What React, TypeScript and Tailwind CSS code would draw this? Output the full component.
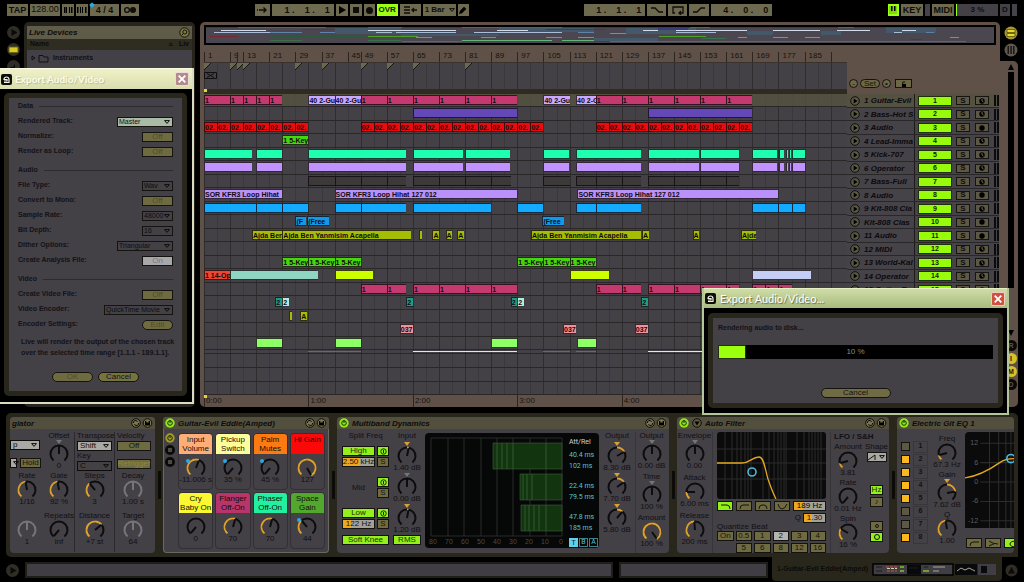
import { Fragment, type ReactNode } from "react";

type Clip = [from: number, to: number, text?: string, tone?: string];
type Lane = { tone: string; clips: Clip[] };

// length of the visible arrangement, in bars
const BARS = 197;

const pct = (bars: number) => `${(bars / BARS) * 100}%`;

const PINK = "bg-[#c43a6e]";
const LILAC = "bg-[#c9a8ff]";
const TEAL = "bg-[#1f9b82]";
const MINT = "bg-[#b3ebdf]";
const LIME = "bg-[#ccff00]";

// same text on back-to-back clips of equal length
function run(from: number, to: number, step: number, text?: string): Clip[] {
  const out: Clip[] = [];
  for (let b = from; b < to; b += step) out.push([b, Math.min(b + step, to), text]);
  return out;
}

const DRUMS: Clip[] = [
  [1, 15.8],
  [17, 24.8],
  [33, 62.9],
  [65, 80.4],
  [81, 94.9],
  [105, 112.8],
  [115, 135],
  [137, 152.6],
  [153, 165],
  [169, 176.5],
  [177.2, 178.6],
  [179.2, 179.8],
  [180.2, 180.7],
  [181.2, 185],
];

const LANES: Lane[] = [
  {
    tone: PINK,
    clips: [
      [1, 9, "1"],
      ...run(9, 25, 4, "1"),
      [33, 41, "40 2-Gu", LILAC],
      [41, 49, "40 2-Gu", LILAC],
      ...run(49, 97, 8, "1"),
      [105, 113, "40 2-Gu", LILAC],
      [115, 121, "40 2-G", LILAC],
      ...run(121, 169, 8, "1"),
    ],
  },
  { tone: "bg-[#6548b8]", clips: [[65, 97], [137, 169]] },
  {
    tone: "bg-[#ea0c0c]",
    clips: [...run(1, 33, 4, "02."), ...run(49, 105, 4, "02."), ...run(121, 169, 4, "02.")],
  },
  { tone: "bg-[#46d60e]", clips: [[25, 33, "1 5-Key"]] },
  { tone: "bg-[#1fffb0]", clips: DRUMS },
  { tone: "bg-[#c093ff]", clips: DRUMS },
  {
    tone: "bg-[#3b3a39]",
    clips: [...run(33, 63, 8), ...run(65, 95, 8), [105, 113], [115, 121], ...run(121, 135, 8), ...run(137, 165, 8)],
  },
  {
    tone: "bg-[#ba90fa]",
    clips: [
      [1, 25, "SOR KFR3 Loop Hihat"],
      [41, 97, "SOR KFR3 Loop Hihat 127 012"],
      [115.4, 177, "SOR KFR3 Loop Hihat 127 012"],
    ],
  },
  {
    tone: "bg-[#12abff]",
    clips: [
      [1, 17],
      [17, 25],
      [25, 33],
      [41, 49],
      [49, 63],
      [65, 89],
      [97, 105],
      [115, 121],
      [121, 135],
      [169, 177],
      [177, 181],
      [181, 185],
    ],
  },
  {
    tone: "bg-[#1299e6]",
    clips: [[29, 32.4, "(F"], [32.6, 39.2, "(Free"], [104.7, 111.3, "(Free"]],
  },
  {
    tone: "bg-[#a5bd04]",
    clips: [
      [15.7, 25, "Ajda Ben"],
      [25, 64.4, "Ajda Ben Yanmisim Acapella"],
      [67, 67.9],
      [71, 72.9, "A"],
      [75, 76.9, "A"],
      [78.6, 80.6, "A"],
      [101.2, 135, "Ajda Ben Yanmisim Acapella"],
      [135.2, 137.2, "A"],
      [150.7, 152.7, "A"],
      [165.5, 170, "Ajda"],
    ],
  },
  { tone: "bg-transparent", clips: [] },
  { tone: "bg-[#46d60e]", clips: [...run(25, 49, 8, "1 5-Key"), ...run(97, 121, 8, "1 5-Key")] },
  {
    tone: LIME,
    clips: [
      [1, 9, "1 14-Op", "bg-[#ee4630]"],
      [9, 36, "", "bg-[#90d5c2]"],
      [41, 52.9],
      [113, 125],
      [169, 187, "", "bg-[#c5cff6]"],
    ],
  },
  {
    tone: PINK,
    clips: [
      ...run(49, 63, 8, "1"),
      ...run(65, 97, 8, "1"),
      ...run(121, 135, 8, "1"),
      ...run(137, 165, 8, "1"),
      ...run(169, 181, 4, "1"),
    ],
  },
  {
    tone: TEAL,
    clips: [
      [22.8, 25, "2"],
      [25, 27, "2", MINT],
      [63, 65, "2"],
      [95, 97, "2"],
      [97, 99, "2", MINT],
      [135, 137, "2"],
    ],
  },
  { tone: "bg-[#a5bd04]", clips: [[27, 28], [30.5, 32.5, "A"]] },
  { tone: "bg-[#ee929c]", clips: [[61, 65, "037"], [111, 115, "037"], [133, 137, "037"]] },
  { tone: "bg-[#8fff68]", clips: [[17, 25], [41, 49], [89, 97], [115.3, 121]] },
];

const FOLDED: Clip[] = [
  [33, 49, "", "bg-[#2f7c9e]"],
  [65, 97, "", "bg-[#e6e6e6]"],
  [105, 113, "", "bg-[#2f7c9e]"],
  [115, 121, "", "bg-[#2f7c9e]"],
  [137, 185, "", "bg-[#e6e6e6]"],
];

const TRACKS: [name: string, no: string, kind: "midi" | "audio"][] = [
  ["1 Guitar-Evil", "1", "midi"],
  ["2 Bass-Hot S", "2", "midi"],
  ["3 Audio", "3", "audio"],
  ["4 Lead-Imma", "4", "midi"],
  ["5 Kick-707", "5", "midi"],
  ["6 Operator", "6", "midi"],
  ["7 Bass-Full", "7", "midi"],
  ["8 Audio", "8", "audio"],
  ["9 Kit-808 Cla", "9", "midi"],
  ["Kit-808 Clas", "10", "audio"],
  ["11 Audio", "11", "audio"],
  ["12 MIDI", "12", "midi"],
  ["13 World-Kal", "13", "midi"],
  ["14 Operator", "14", "midi"],
  ["15 Guitar-E", "15", "midi"],
];

const RULER = [1, 9, 11, 13, 21, 29, 37, 45, 49, 57, 65, 73, 81, 89, 97, 105, 113, 121, 129, 137, 145, 153, 161, 169, 177, 185, 193];
const HIDDEN_LABELS = [11, 193];
const LOCATORS = [1, 9, 11, 13, 29, 37, 49, 57, 65, 81];

const key = "flex h-[12px] items-center justify-center bg-[#6e6a50] px-1 text-[9px] leading-none font-bold text-[#0e0d0a]";

/* ---------- transport ---------- */

function Transport() {
  return (
    <header className="flex items-center justify-between px-[7px] pt-[4px] pb-[6px]">
      <div className="flex gap-[2px]">
        <button className={`${key} w-[21px] text-[8px]`}>TAP</button>
        <input
          aria-label="Tempo"
          defaultValue="128.00"
          className="h-[12px] w-[30px] bg-[#6e6a50] text-center text-[9px] text-[#0e0d0a]"
        />
        <button aria-label="Nudge down" className={`${key} w-[12px]`}>
          <Bars xs={[2, 4, 7, 9]} />
        </button>
        <button aria-label="Nudge up" className={`${key} w-[12px]`}>
          <Bars xs={[1, 4, 6, 9]} />
        </button>
        <button className={`${key} relative w-[29px]`}>
          4 / 4
          <i className="absolute -top-px left-0 size-[4px] rotate-45 bg-[#27a9e8]" />
        </button>
        <button aria-label="Metronome" className={`${key} w-[18px]`}>
          <svg viewBox="0 0 14 8" className="h-[8px] w-[14px] shrink-0">
            <circle cx="4" cy="4" r="2.4" fill="none" stroke="#0e0d0a" strokeWidth="1.3" />
            <circle cx="10" cy="4" r="3" fill="#0e0d0a" />
          </svg>
        </button>
      </div>

      <div className="flex gap-[2px]">
        <button aria-label="Follow" className={`${key} w-[15px]`}>
          <svg viewBox="0 0 12 8" className="h-[8px] w-[12px] shrink-0" fill="none" stroke="#0e0d0a" strokeWidth="1.4">
            <path d="M1 4h1M3 4h7M7.500 1.500 10 4 7.500 6.500" />
          </svg>
        </button>
        <div className={`${key} w-[62px] justify-end gap-[10px]`}>
          <span>1 .</span>
          <span>1 .</span>
          <span>1</span>
        </div>
        <button aria-label="Play" className={`${key} w-[12px]`}>
          <svg viewBox="0 0 8 8" className="size-[8px] shrink-0">
            <path d="M1 0v8l7-4z" />
          </svg>
        </button>
        <button aria-label="Stop" className={`${key} w-[12px]`}>
          <i className="size-[6px] shrink-0 bg-[#0e0d0a]" />
        </button>
        <button aria-label="Record" className={`${key} w-[11px]`}>
          <i className="size-[7px] shrink-0 rounded-full bg-[#0e0d0a]" />
        </button>
        <button className="flex h-[12px] w-[21px] items-center justify-center bg-[#9dff12] text-[8px] font-bold text-[#16220a]">
          OVR
        </button>
        <button aria-label="Back to arrangement" className={`${key} w-[21px]`}>
          <svg viewBox="0 0 14 8" className="h-[8px] w-[14px] shrink-0" fill="none" stroke="#0e0d0a" strokeWidth="1.3">
            <path d="M1 1h6M1 4h6M1 7h6M9 4h5M11 2 9 4l2 2" />
          </svg>
        </button>
        <select aria-label="Quantization" className="h-[12px] w-[26px] appearance-none bg-[#6e6a50] pl-[2px] text-[8px] font-bold text-[#0e0d0a]">
          <option>1 Bar</option>
        </select>
        <span className="-ml-[2px] flex h-[12px] w-[7px] items-center bg-[#6e6a50]">
          <Down />
        </span>
        <button aria-label="Draw mode" className={`${key} w-[11px]`}>
          <svg viewBox="0 0 8 8" className="size-[8px] shrink-0">
            <path d="M0 8l.8-3L5 .8 7.300 3 3 7.300z" />
          </svg>
        </button>
      </div>

      <div className="flex gap-[2px]">
        <div className={`${key} w-[61px] justify-end gap-[10px]`}>
          <span>1 .</span>
          <span>1 .</span>
          <span>1</span>
        </div>
        <button aria-label="Punch in" className={`${key} w-[19px]`}>
          <Line d="M1 2h4l4 4h4" />
        </button>
        <button aria-label="Loop" className={`${key} w-[19px]`}>
          <Line d="M4 7H2V1h10v6H8M10 5 8 7l2 2" />
        </button>
        <button aria-label="Punch out" className={`${key} w-[20px]`}>
          <Line d="M1 6h4l4-4h4" />
        </button>
        <div className={`${key} w-[61px] justify-end gap-[10px]`}>
          <span>4 .</span>
          <span>0 .</span>
          <span>0</span>
        </div>
      </div>

      <div className="flex gap-[2px]">
        <button aria-label="Computer keyboard" className="flex h-[12px] w-[11px] items-center justify-center bg-[#9dff12]">
          <svg viewBox="0 0 8 8" className="size-[8px]">
            <path d="M0 0h8v8H0z" fill="#7fd80e" />
            <path d="M2 0h1.500v5H2zM5 0h1.500v5H5z" />
          </svg>
        </button>
        <button className={`${key} w-[22px] text-[8px]`}>KEY</button>
        <i className="h-[12px] w-[5px] bg-[#45434a]" />
        <button className={`${key} w-[22px] text-[8px]`}>MIDI</button>
        <div className="flex h-[12px] w-[42px] items-center justify-center border-l border-[#9dff12] bg-[#434046] text-[8px] font-bold text-[#100f12]">
          3 %
        </div>
        <div className="flex h-[12px] w-[10px] items-center justify-center bg-[#434046] text-[8px] font-bold text-[#100f12]">
          D
        </div>
        <i className="h-[12px] w-[5px] bg-[#45434a]" />
      </div>
    </header>
  );
}

function Bars({ xs }: { xs: number[] }) {
  return (
    <svg viewBox="0 0 12 8" className="h-[8px] w-[12px] shrink-0">
      {xs.map((x, i) => (
        <rect key={x} x={x} y="1" width={i % 3 === 0 ? 1.5 : 1} height="6" />
      ))}
    </svg>
  );
}

function Line({ d }: { d: string }) {
  return (
    <svg viewBox="0 0 14 9" className="h-[9px] w-[14px] shrink-0" fill="none" stroke="#0e0d0a" strokeWidth="1.3">
      <path d={d} />
    </svg>
  );
}

function Down() {
  return (
    <svg viewBox="0 0 6 4" className="h-[4px] w-[6px] shrink-0" fill="none" stroke="#0e0d0a" strokeWidth="1">
      <path d="M.6.6h4.800L3 3.400z" />
    </svg>
  );
}

/* ---------- browser ---------- */

function Browser() {
  return (
    <aside className="flex w-[195px] shrink-0">
      <nav className="flex w-[24px] flex-col items-center gap-[4px] pt-[4px] pl-[2px]">
        <RoundKey label="Show browser">
          <path d="M4.500 3v7l6-3.500z" fill="#0a0a08" />
        </RoundKey>
        <RoundKey label="Live devices">
          <path d="M2 4h9v5.500H2z" fill="#d8c828" stroke="#6d6410" />
        </RoundKey>
        <RoundKey label="Plug-ins">
          <path d="M3 7h3l2-3v5H3z" fill="#0a0a08" />
        </RoundKey>
      </nav>
      <div className="flex flex-1 flex-col rounded-[5px] bg-[#26241c] px-[3px] py-[4px]">
        <div className="flex h-[13px] items-center justify-between bg-[#5e5b48] px-[2px]">
          <h2 className="text-[8px] font-bold text-[#0e0d0a] italic">Live Devices</h2>
          <svg viewBox="0 0 11 11" className="size-[11px]" fill="none" stroke="#14130c">
            <circle cx="5.500" cy="5.500" r="4.700" fill="#7d7a3e" />
            <circle cx="5.800" cy="5" r="2" />
            <path d="M4.500 6.500 3 8" />
          </svg>
        </div>
        <div className="flex h-[11px] items-center bg-[#2f2c22] px-[3px] text-[7px] font-bold text-[#0c0b08]">
          <span className="flex-1">Name</span>
          <span className="pr-[6px]">▵</span>
          <span>Liv</span>
        </div>
        <ul className="flex-1 bg-[#434046] pt-[2px] pl-[4px] text-[7px] font-bold text-[#121015]">
          <li className="flex h-[12px] items-center gap-[4px]">
            <svg viewBox="0 0 18 10" className="h-[10px] w-[18px]" fill="none" stroke="#121015">
              <path d="M1 3v4l3-2zM8 2.500h4l1 1.500h4v5H8z" />
            </svg>
            Instruments
          </li>
        </ul>
      </div>
    </aside>
  );
}

function RoundKey({ label, children }: { label: string; children: ReactNode }) {
  return (
    <button aria-label={label} className="size-[13px]">
      <svg viewBox="0 0 13 13" className="size-[13px]">
        <circle cx="6.500" cy="6.500" r="6.500" fill="#2f2d26" />
        {children}
      </svg>
    </button>
  );
}

/* ---------- arrangement ---------- */

function ClipBox({ clip, tone }: { clip: Clip; tone: string }) {
  const [from, to, text, own] = clip;
  return (
    <div
      className={`absolute inset-y-px overflow-hidden border border-r-0 border-[#120a12]/80 text-[7px] leading-[9px] font-bold whitespace-nowrap text-[#120a12] ${own ?? tone}`}
      style={{ left: pct(from - 1), width: pct(to - from) }}
    >
      {text}
    </div>
  );
}

function GridLines() {
  return (
    <>
      {Array.from({ length: 49 }, (_, i) => (
        <i
          key={i}
          className={`absolute inset-y-0 w-px ${i % 2 ? "bg-[#3b383b]" : "bg-[#302d2e]"}`}
          style={{ left: pct(i * 4) }}
        />
      ))}
    </>
  );
}

// miniature of the whole set: horizontal stripes, grouped by colour
const STRIPES: [color: string, d: string][] = [
  ["#45586a", "M129 1h66v6h-66zM195 7h98v2h-98zM293 1h95v4h-95zM388 11h64v3h-64zM420 1h70v6h-70zM541 4h26v4h-26zM615 4h20v4h-20zM680 1h50v5h-50z"],
  ["#7d1f30", "M0 0h679v1H0z"],
  ["#a83c58", "M32 0h88v1H32zM162 0h34v1h-34zM256 0h100v1H256zM484 0h20v1h-20zM632 0h16v1h-16z"],
  ["#3b3a78", "M96 2h32v1H96zM340 2h60v1h-60zM452 1h30v2h-30z"],
  ["#d4dbe8", "M15 3h45v1H15zM162 3h88v1h-88zM291 3h31v1h-31zM437 3h15v1h-15zM470 3h71v1h-71zM567 3h47v1h-47zM631 3h33v1h-33zM696 3h14v1h-14z"],
  ["#a9bcd8", "M8 5h56v1H8zM170 5h16v1h-16zM190 5h60v1h-60zM268 5h88v1h-88zM470 5h40v1h-40zM688 5h8v1h-8z"],
  ["#5d84a8", "M64 5h32v1H64zM114 5h15v1h-15zM372 5h16v1h-16zM720 5h8v1h-8z"],
  ["#8d8790", "M404 6h16v1h-16zM210 10h16v1h-16zM275 10h15v1h-15zM340 10h16v1h-16zM372 10h16v1h-16zM532 10h9v1h-9zM567 10h15v1h-15zM599 10h15v1h-15zM744 10h9v1h-9z"],
  ["#2a5a38", "M66 9h94v1H66zM388 8h70v1h-70z"],
  ["#4aa325", "M162 9h50v1h-50zM453 9h47v1h-47z"],
  ["#38704a", "M64 13h32v1H64zM162 13h33v1h-33zM496 11h24v1h-24z"],
  ["#65b676", "M256 13h90v1h-90zM356 13h32v1h-32z"],
  ["#7a2630", "M4 9h27v1H4zM388 14h32v1h-32zM705 12h11v1h-11z"],
  ["#6b6a36", "M196 14h60v1h-60zM404 14h150v1H404zM550 14h210v1H550z"],
];

function Overview() {
  return (
    <div className="mx-[4px] h-[20px] border-2 border-black bg-[#4a4750]">
      <svg viewBox="0 0 788 16" preserveAspectRatio="none" className="block h-full w-full">
        {STRIPES.map(([color, d]) => (
          <path key={color} d={d} fill={color} />
        ))}
      </svg>
    </div>
  );
}

function Timeline() {
  return (
    <div className="min-w-0 flex-1">
      <div className="relative h-[18px] border-b border-[#3a322d]">
        {RULER.map((b) => (
          <span
            key={b}
            className="absolute bottom-0 flex h-[10px] items-start border-l border-[#2c2520] pl-[3px] text-[8px] leading-[8px] text-[#17120f]"
            style={{ left: pct(b - 1) }}
          >
            {!HIDDEN_LABELS.includes(b) && b}
          </span>
        ))}
      </div>
      <div className="relative h-[26px] overflow-hidden bg-[#434046]">
        <GridLines />
        {LOCATORS.map((b) => (
          <svg key={b} viewBox="0 0 7 7" className="absolute top-0 size-[7px]" style={{ left: pct(b - 1) }}>
            <path d="M0 0h7L0 7z" fill="#6c684f" />
            <path d="M7 0 0 7" stroke="#17150f" />
          </svg>
        ))}
        <svg viewBox="0 0 13 7" className="absolute top-[9px] left-0 h-[7px] w-[13px]" fill="none" stroke="#100e10">
          <path d="M.5.5h12v6H.5zM3 5.500l7-4M3 1.500l7 4" />
        </svg>
      </div>
      <div className="h-[5px] bg-[#2f2a22]">
        <i className="block size-[3px] bg-[#e6d23c]" />
      </div>
      <div className="relative overflow-hidden bg-[#434046]">
        <GridLines />
        {LANES.map((lane, i) => (
          <div
            key={i}
            className="relative h-[14px] border-b border-[#2a2728] first-of-type:bg-[#55523f]/80 even:h-[13px]"
          >
            <div className="relative h-[12px]">
              {lane.clips.map((c, n) => (
                <ClipBox key={n} clip={c} tone={lane.tone} />
              ))}
            </div>
          </div>
        ))}
        <div className="relative h-[4px] border-b border-[#2a2728]">
          {FOLDED.map((c) => (
            <i
              key={c[0]}
              className={`absolute top-px h-px ${c[3]}`}
              style={{ left: pct(c[0] - 1), width: pct(c[1] - c[0]) }}
            />
          ))}
        </div>
        <div className="relative h-[14px] border-b border-[#2a2728]" />
        <div className="relative h-[14px] border-b border-[#2a2728]" />
        <div className="relative h-[13px] border-b border-[#2a2728]" />
      </div>
      <div className="relative h-[12px] text-[8px] leading-[12px] text-[#17120f]">
        {[0, 1, 2, 3, 4, 5].map((m) => (
          <span key={m} className="absolute border-l border-[#2c2520] pl-px" style={{ left: pct(m * 32) }}>
            {m}:00
          </span>
        ))}
        <i className="absolute top-0 left-0 size-[3px] bg-[#e6d23c]" />
      </div>
    </div>
  );
}

function TrackHeader({ track, first }: { track: (typeof TRACKS)[number]; first: boolean }) {
  const [name, no, kind] = track;
  const small = "flex h-[9px] w-[14px] items-center justify-center border border-[#17150f] bg-[#5c5844] text-[8px] leading-none font-bold text-[#0e0d0a]";
  return (
    <li
      className={`flex h-[14px] items-center border-b border-[#2a2728] pl-[3px] even:h-[13px] ${
        first ? "bg-[#545140]" : "bg-[#454248]"
      }`}
    >
      <button aria-label={`Unfold ${name}`}>
        <svg viewBox="0 0 10 10" className="block size-[10px]">
          <circle cx="5" cy="5" r="4.300" fill="#5c5844" stroke="#0e0d0a" />
          <path d="M3.700 2.500v5L7.500 5z" />
        </svg>
      </button>
      <span className="ml-[4px] w-[50px] overflow-hidden text-[8px] leading-[11px] font-bold whitespace-nowrap text-[#0c0a0e] italic">
        {name}
      </span>
      <i className="mr-[3px] w-px self-stretch bg-[#1c1a1b]" />
      <button className="h-[10px] w-[34px] border border-[#20300a] bg-[#98fb0c] text-[7px] leading-[8px] font-bold text-[#16220a]">
        {no}
      </button>
      <button className={`${small} ml-[4px]`}>S</button>
      <button aria-label={`Arm ${name}`} className={`${small} ml-[5px]`}>
        <svg viewBox="0 0 6 6" className="size-[6px]">
          <circle cx="3" cy="3" r="2.700" />
          {kind === "midi" && <path d="M3 3 3 1M3 3l1.500 1" stroke="#8a8566" strokeWidth=".8" />}
        </svg>
      </button>
      <i className="ml-[5px] h-[11px] w-[2px] bg-[#0c0b0c]" />
      <i className="ml-px h-[11px] w-[2px] bg-[#0c0b0c]" />
    </li>
  );
}

function TrackHeaders() {
  const pill = "h-[9px] border border-[#15130d] bg-[#6c6745] text-[8px] leading-[7px] text-[#15130d]";
  return (
    <div className="w-[153px] shrink-0">
      <div className="flex h-[49px] items-end gap-[2px] pb-[6px] pl-[2px]">
        <button className={`${pill} w-[9px] rounded-full`}>-</button>
        <button className={`${pill} w-[20px] rounded-full`}>Set</button>
        <button className={`${pill} w-[9px] rounded-full`}>•</button>
        <button aria-label="Lock" className={`${pill} ml-[2px] flex w-[17px] items-center justify-center`}>
          <svg viewBox="0 0 6 6" className="size-[6px]">
            <path d="M1 3h4v3H1z" />
            <path d="M1.700 3V1h2.600" fill="none" stroke="#15130d" />
          </svg>
        </button>
      </div>
      <ul className="mr-[1px]">
        {TRACKS.map((t, i) => (
          <TrackHeader key={t[1]} track={t} first={i === 0} />
        ))}
      </ul>
    </div>
  );
}

function Arrangement() {
  return (
    <main className="flex min-w-0 flex-1">
      <section aria-label="Arrangement" className="min-w-0 flex-1 rounded-l-[5px] rounded-tr-[5px] bg-[#5f5148] pt-[3px]">
        <Overview />
        <div className="flex pl-[4px]">
          <Timeline />
          <TrackHeaders />
        </div>
      </section>
      <div className="flex w-[18px] flex-col">
        <div className="flex flex-col items-center gap-[3px] pt-[4px] pb-[4px] pl-[3px]">
          <button aria-label="Arrangement view">
            <svg viewBox="0 0 14 14" className="block size-[14px]">
              <circle cx="7" cy="7" r="6.500" fill="#a59a32" />
              <path d="M3 3.500h8v3H3zM3 7.500h8v3H3z" fill="#ead62e" stroke="#4a4410" strokeWidth=".7" />
            </svg>
          </button>
          <button aria-label="Session view">
            <svg viewBox="0 0 14 14" className="block size-[14px]">
              <circle cx="7" cy="7" r="6.500" fill="#5f5950" />
              <path d="M3.500 3h1.500v8H3.500zM6.300 3h1.500v8H6.300zM9 3h1.500v8H9z" fill="#1a1714" />
            </svg>
          </button>
        </div>
        <div className="flex flex-1 flex-col items-center rounded-tr-[5px] rounded-br-[5px] bg-[#5f5148] pt-[3px] pl-[4px]">
          <svg viewBox="0 0 6 6" className="size-[6px]">
            <path d="M3 0l3 6H0z" />
          </svg>
          <i className="mt-[2px] h-[216px] w-[6px] bg-black" />
          <svg viewBox="0 0 6 6" className="mt-[42px] mb-[4px] size-[6px]">
            <path d="M3 6l3-6H0z" />
          </svg>
          {["R", "I", "M", "D"].map((s, i) => (
            <button
              key={s}
              className={`mb-[2px] size-[11px] shrink-0 rounded-full text-[7px] leading-[11px] font-bold ${
                i === 1 || i === 2 ? "bg-[#d3c22a] text-[#1d1a06]" : "bg-[#0b0a09] text-[#5f5148]"
              }`}
            >
              {s}
            </button>
          ))}
        </div>
      </div>
    </main>
  );
}

/* ---------- device parts ---------- */

const point = (deg: number, r: number) => {
  const a = (deg * Math.PI) / 180;
  return `${(Math.sin(a) * r).toFixed(2)} ${(-Math.cos(a) * r).toFixed(2)}`;
};

const arc = (a: number, b: number, r: number) => {
  const [from, to] = a < b ? [a, b] : [b, a];
  return `M${point(from, r)}A${r} ${r} 0 ${to - from > 180 ? 1 : 0} 1 ${point(to, r)}`;
};

type KnobProps = {
  label?: string;
  value: string;
  angle: number;
  // where the coloured part of the ring begins; none when left out
  from?: number;
  dim?: boolean;
  center?: boolean;
  mapped?: boolean;
};

function Knob({ label, value, angle, from, dim, center, mapped }: KnobProps) {
  const ink = dim ? "#77747a" : "#0d0c0e";
  return (
    <label className="flex flex-col items-center text-[8px] leading-[8px] whitespace-nowrap text-[#121014]">
      {label}
      <input type="range" min={-135} max={135} defaultValue={angle} aria-label={label ?? value} className="sr-only" />
      <svg
        viewBox={center ? "-11 -14 22 22" : "-11 -10 22 18"}
        className={center ? "h-[22px] w-[22px]" : "h-[18px] w-[22px]"}
        fill="none"
        strokeWidth="2"
      >
        <path d={arc(-140, 140, 8.5)} stroke={ink} />
        {from !== undefined && <path d={arc(from, angle, 8.5)} stroke={dim ? "#8b888e" : "#dba032"} />}
        <path d={`M0 0L${point(angle, 8)}`} stroke={ink} />
        {center && <path d="M-3-14h6l-3 4z" fill={from === undefined ? "#77747a" : "#dba032"} />}
        {mapped && <circle cx="-8" cy="-7" r="2" fill="#27a9e8" />}
      </svg>
      {value}
    </label>
  );
}

function PowerDot({ on = true }: { on?: boolean }) {
  return (
    <svg viewBox="0 0 10 10" className="block size-[10px] shrink-0">
      <circle cx="5" cy="5" r="4.700" fill={on ? "#93e81c" : "#a79b26"} />
      <circle cx="5" cy="5" r="2.300" fill="none" stroke="#1e3006" />
      <path d="M5 2v3" stroke="#1e3006" />
    </svg>
  );
}

type DeviceProps = { title: string; className: string; power?: boolean; tools?: boolean; menu?: boolean; children: ReactNode };

function Device({ title, className, power = true, tools = true, menu, children }: DeviceProps) {
  return (
    <article className={`flex flex-col overflow-hidden rounded-[4px] bg-[#434046] ${className}`}>
      <div className="flex h-[12px] shrink-0 items-center gap-[3px] bg-[#524f3f] px-[2px]">
        {power && (
          <button aria-label={`${title} on`}>
            <PowerDot />
          </button>
        )}
        {menu && (
          <svg viewBox="0 0 10 10" className="size-[10px]">
            <circle cx="5" cy="5" r="4.300" fill="#5e5a40" stroke="#0e0d0a" />
            <path d="M2.500 3.500h5L5 7.500z" />
          </svg>
        )}
        <h3 className="flex-1 overflow-hidden text-[8px] leading-[11px] font-bold whitespace-nowrap text-[#0e0d0a] italic">{title}</h3>
        {tools && (
          <svg viewBox="0 0 22 10" className="h-[10px] w-[22px]">
            <circle cx="5" cy="5" r="4.300" fill="#7a7650" stroke="#0e0d0a" />
            <path d="M2.500 5a2 2 0 0 1 4-1M7.500 5a2 2 0 0 1-4 1" fill="none" stroke="#0e0d0a" />
            <circle cx="16.500" cy="5" r="4.300" fill="#7a7650" stroke="#0e0d0a" />
            <path d="M14 3h5v4.500h-5z" />
            <path d="M15.300 3h2.400v1.500h-2.400z" fill="#7a7650" />
          </svg>
        )}
      </div>
      {children}
    </article>
  );
}

function Handle() {
  return (
    <div className="flex w-[8px] shrink-0 items-center justify-center">
      <i className="h-[28px] w-[3px] bg-[#0c0b08]" />
    </div>
  );
}

function Dropdown({ label, value, className, on }: { label: string; value: string; className: string; on?: boolean }) {
  return (
    <span
      className={`flex h-[10px] items-center border border-[#0e0d0a] pr-[2px] ${
        on ? "bg-[#a9aaa3]" : "bg-transparent"
      } ${className}`}
    >
      <select aria-label={label} className="h-[8px] min-w-0 flex-1 appearance-none pl-[2px] text-[8px] leading-[8px] text-[#0e0d0a]">
        <option>{value}</option>
      </select>
      <Down />
    </span>
  );
}

const toggle = "flex h-[10px] items-center justify-center border border-[#15130d] text-[8px] leading-none whitespace-nowrap";
const toggleOff = `${toggle} bg-[#6e6a42] text-[#15130d]`;
const toggleOn = `${toggle} bg-[#93f01a] text-[#16300a]`;

/* ---------- devices ---------- */

function Arpeggiator() {
  const caption = "text-[8px] leading-[8px] text-[#121014]";
  return (
    <Device title="giator" className="w-[145px] shrink-0" power={false}>
      <div className="grid grid-cols-[34px_30px_41px_36px] grid-rows-[40px_40px_40px] pt-[3px]">
        <div className="flex flex-col items-start gap-[8px] pt-[8px]">
          <Dropdown label="Style" value="p" className="w-[30px]" on />
          <div className="flex gap-[3px]">
            <Dropdown label="Groove" value="" className="w-[7px]" on />
            <button className={`${toggleOff} w-[21px]`}>Hold</button>
          </div>
        </div>
        <Knob label="Offset" value="0" angle={0} center />
        <div className="flex flex-col gap-px border-x border-[#2b292d] px-[2px]">
          <span className={caption}>Transpose</span>
          <Dropdown label="Transpose" value="Shift" className="w-[35px]" on />
          <span className={caption}>Key</span>
          <Dropdown label="Key" value="C" className="w-[35px]" />
        </div>
        <div className="flex flex-col pl-[2px]">
          <span className={caption}>Velocity</span>
          <button className={`${toggleOff} mt-px w-[34px]`}>Off</button>
          <button className={`${toggle} mt-[8px] w-[34px] bg-[#6e6a42] text-[7px] text-[#8e8a3a]`}>Retrigger</button>
        </div>
        <Knob label="Rate" value="1/16" angle={-10} from={-140} />
        <Knob label="Gate" value="92 %" angle={-10} from={-140} />
        <div className="border-x border-[#2b292d]">
          <Knob label="Steps" value="3" angle={-40} from={-140} />
        </div>
        <Knob label="Decay" value="1.00 s" angle={0} dim />
        <div className="pt-[8px]">
          <Knob value="1" angle={0} dim />
        </div>
        <Knob label="Repeats" value="inf" angle={-140} />
        <div className="border-x border-[#2b292d]">
          <Knob label="Distance" value="+7 st" angle={50} from={-140} />
        </div>
        <Knob label="Target" value="64" angle={0} dim />
      </div>
    </Device>
  );
}

const MACROS: [name: string, tone: string, value: string, angle: number, from: number | undefined, mapped: boolean][] = [
  ["Input\nVolume", "bg-[#fdae78]", "-11.006 s", 20, -140, true],
  ["Pickup\nSwitch", "bg-[#fdfd9a]", "35 %", -140, undefined, true],
  ["Palm\nMutes", "bg-[#fd7a12]", "45 %", -140, undefined, true],
  ["Hi Gain", "bg-[#fb0808]", "127", 150, -140, false],
  ["Cry\nBaby On", "bg-[#fbf832]", "0", -140, undefined, false],
  ["Flanger\nOff-On", "bg-[#b8356c]", "70", 15, -140, false],
  ["Phaser\nOff-On", "bg-[#22f0a0]", "70", 15, -140, false],
  ["Space\nGain", "bg-[#52a82c]", "44", -40, -140, true],
];

function Rack() {
  return (
    <Device title="Guitar-Evil Eddie(Amped)" className="w-[166px] shrink-0 ring-1 ring-[#6a6864] ring-inset">
      <div className="flex flex-1 gap-[3px] py-[4px] pr-[4px] pl-[2px]">
        <div className="flex flex-col gap-[2px]">
          <PowerDot on={false} />
          {["Chains", "Devices"].map((n) => (
            <button key={n} aria-label={n} className="size-[10px] rounded-full bg-[#0b0a09] p-[3px]">
              <i className="block size-[4px] bg-[#4b4940]" />
            </button>
          ))}
        </div>
        <div className="grid flex-1 grid-cols-4 gap-[2px]">
          {MACROS.map(([name, tone, value, angle, from, mapped]) => (
            <div key={name} className="flex flex-col rounded-[4px] border border-[#323034] bg-[#434046]">
              <span
                className={`h-[20px] rounded-t-[3px] pt-px text-center text-[8px] leading-[9px] whitespace-pre text-[#120e08] ${tone}`}
              >
                {name}
              </span>
              <div className="pt-[4px]">
                <Knob value={value} angle={angle} from={from} mapped={mapped} />
              </div>
            </div>
          ))}
        </div>
      </div>
    </Device>
  );
}

function Band({ name, freq, fill }: { name: string; freq?: string; fill?: string }) {
  return (
    <div className="grid h-[31px] grid-cols-[33px_12px] content-start gap-x-[2px] gap-y-px">
      {freq ? (
        <button className={toggleOn}>{name}</button>
      ) : (
        <span className="row-span-2 self-center text-center text-[8px] text-[#121014]">{name}</span>
      )}
      <button aria-label={`${name} band active`} className={toggleOn}>
        <svg viewBox="0 0 7 7" className="size-[7px]" fill="none" stroke="#16300a">
          <circle cx="3.500" cy="3.500" r="2.700" />
          <path d="M3.500 2v3" />
        </svg>
      </button>
      {freq && <span className={`${toggle} bg-linear-to-r text-[#15130d] ${fill}`}>{freq}</span>}
      <button className={toggleOff}>S</button>
    </div>
  );
}

function Multiband() {
  const head = "text-center text-[8px] leading-[8px] whitespace-nowrap text-[#121014]";
  return (
    <Device title="Multiband Dynamics" className="w-[332px] shrink-0">
      <div className="flex flex-1 gap-[4px] pt-[3px] pr-[2px] pl-[5px]">
        <div className="w-[47px]">
          <div className={head}>Split Freq</div>
          <div className="pt-[6px]">
            <Band name="High" freq="2.50 kHz" fill="from-[#eea820] from-55% to-[#a3a29a] to-55%" />
            <Band name="Mid" />
            <Band name="Low" freq="122 Hz" fill="from-[#eea820] from-25% to-[#a3a29a] to-25%" />
          </div>
          <button className={`${toggleOn} mt-[-4px] w-full`}>Soft Knee</button>
        </div>
        <div className="w-[28px]">
          <div className={head}>Input</div>
          <div className="flex flex-col gap-px pt-[2px]">
            <Knob value="1.40 dB" angle={12} from={0} center />
            <Knob value="0.00 dB" angle={0} center />
            <Knob value="1.20 dB" angle={10} from={0} center />
          </div>
          <button className={`${toggleOn} mt-px w-full`}>RMS</button>
        </div>
        <div className="my-px flex h-[115px] min-w-0 flex-1 gap-[6px] rounded-[4px] bg-[#060707] p-[4px] pr-0">
          <svg viewBox="0 0 134 108" className="h-[108px] w-[134px] shrink-0">
            <path d="M2 1h131v98H2zM19 1v98M35 1v98M52 1v98M68 1v98M84 1v98M101 1v98M117 1v98" fill="none" stroke="#2b2b2c" />
            <g fill="#12350f" stroke="#41603e" strokeWidth=".6">
              <path d="M64 6h69v26H64zM91 37h42v26H91zM92 68h41v26H92z" />
            </g>
            <path
              d="M68 6v26M73 6v26M78 6v26M84 6v26M94 37v26M98 37v26M103 37v26M96 68v26M100 68v26M105 68v26M110 68v26M117 6v26M117 37v26M117 68v26"
              stroke="#2e5a2c"
            />
            <g fill="#4a4a4d" fontSize="7" textAnchor="middle">
              {["80", "70", "60", "50", "40", "30", "20", "10", "0"].map((t, i) => (
                <text key={t} x={4 + i * 16} y="107">
                  {t}
                </text>
              ))}
            </g>
          </svg>
          <div className="flex min-w-0 flex-1 flex-col font-['Roboto'] text-[7px] leading-[10px] whitespace-nowrap text-[#57c4d8]">
            <span className="text-[#d5d5d5]">Att/Rel</span>
            <span className="mt-[3px]">40.4 ms</span>
            <span className="mt-px">102 ms</span>
            <span className="mt-[10px]">22.4 ms</span>
            <span className="mt-px">79.5 ms</span>
            <span className="mt-[10px]">47.8 ms</span>
            <span className="mt-px">185 ms</span>
            <div className="mt-[5px] flex gap-px text-center leading-[8px]">
              <button className="size-[9px] bg-[#5fd2ea] text-[#06262c]">T</button>
              <button className="size-[9px] border border-[#3d7f8d] leading-[7px]">B</button>
              <button className="size-[9px] border border-[#3d7f8d] leading-[7px]">A</button>
            </div>
          </div>
        </div>
        <div className="w-[28px]">
          <div className={head}>Output</div>
          <div className="flex flex-col gap-px pt-[2px]">
            <Knob value="8.30 dB" angle={60} from={0} center />
            <Knob value="7.70 dB" angle={55} from={0} center />
            <Knob value="5.80 dB" angle={40} from={0} center />
          </div>
        </div>
        <div className="flex w-[32px] flex-col gap-[3px] border-l border-[#37353a]">
          <Knob label="Output" value="0.00 dB" angle={0} center />
          <Knob label="Time" value="100 %" angle={0} center />
          <Knob label="Amount" value="100 %" angle={145} from={-140} />
        </div>
      </div>
    </Device>
  );
}

function AutoFilter() {
  const shapes = ["M1 2h6q3 0 3 4", "M1 6q0-4 3-4h6", "M1 6q0-4 3-4h2q3 0 3 4", "M1 1q1 5 4 5t5-5"];
  return (
    <Device title="Auto Filter" className="w-[212px] shrink-0" menu>
      <div className="flex flex-1 pt-[3px]">
        <div className="flex w-[36px] shrink-0 flex-col gap-[4px] border-r border-[#37353a]">
          <Knob label="Envelope" value="0.00" angle={0} center />
          <Knob label="Attack" value="6.00 ms" angle={-90} from={-140} />
          <Knob label="Release" value="200 ms" angle={-5} from={-140} />
        </div>
        <div className="flex w-[118px] shrink-0 flex-col border-r border-[#37353a] px-[4px]">
          <svg viewBox="0 0 109 67" className="h-[67px] w-[109px]">
            <rect width="109" height="67" rx="3" fill="#0b0b0b" />
            <path
              d="M8 0v67M15 0v67M20 0v67M24 0v67M28 0v67M31 0v67M34 0v67M46 0v67M52 0v67M57 0v67M61 0v67M64 0v67M67 0v67M69 0v67M80 0v67M87 0v67M92 0v67M95 0v67M98 0v67M101 0v67M104 0v67M0 17h109M0 31h109M0 47h109"
              stroke="#2c2c2d"
            />
            <path d="M0 31h25c8 0 10-6 17-6 5 0 6 12 9 22 3 9 5 14 8 20" fill="none" stroke="#e2a91f" strokeWidth="1.300" />
            <circle cx="35" cy="40" r="4" fill="none" stroke="#4fb8dd" strokeWidth="1.600" />
          </svg>
          <div className="mt-[2px] flex gap-[3px]">
            {shapes.map((d, i) => (
              <button key={d} aria-label={`Filter type ${i + 1}`} className={`${i ? toggleOff : toggleOn} w-[16px]`}>
                <svg viewBox="0 0 11 7" className="h-[7px] w-[11px] shrink-0" fill="none" stroke="#15130d">
                  <path d={d} />
                </svg>
              </button>
            ))}
            <span className={`${toggle} flex-1 bg-linear-to-r from-[#eea820] from-30% to-[#a3a29a] to-30%`}>189 Hz</span>
          </div>
          <div className="mt-[2px] flex h-[10px] items-center justify-end gap-[2px] text-[8px] leading-none text-[#121014]">
            Q
            <span className={`${toggle} w-[23px] bg-linear-to-r from-[#eea820] from-40% to-[#a3a29a] to-40%`}>1.30</span>
          </div>
          <div className="text-[8px] leading-[8px] text-[#121014]">Quantize Beat</div>
          <div className="grid grid-cols-6 gap-x-[2px] gap-y-[2px]">
            {["On", "0.5", "1", "2", "3", "4", "", "5", "6", "8", "12", "16"].map((n, i) => (
              <Fragment key={i}>
                {n ? (
                  <button className={n === "2" ? `${toggle} bg-[#b4b4b0] text-[#15130d]` : toggleOff}>{n}</button>
                ) : (
                  <span />
                )}
              </Fragment>
            ))}
          </div>
        </div>
        <div className="w-[34px] shrink-0">
          <div className="pl-[3px] text-[8px] leading-[9px] font-bold whitespace-nowrap text-[#121014]">LFO / S&amp;H</div>
          <div className="flex flex-col gap-[2px] pt-[2px]">
            <Knob label="Amount" value="3.81" angle={-105} from={-140} />
            <Knob label="Rate" value="0.01 Hz" angle={-140} />
            <Knob label="Spin" value="16 %" angle={-60} from={-140} />
          </div>
        </div>
        <div className="flex w-[23px] shrink-0 flex-col items-center pt-[11px] text-[8px] leading-[8px] text-[#121014]">
          Shape
          <button aria-label="Shape" className={`${toggle} mt-px w-[20px] gap-px bg-[#a9aaa3]`}>
            <svg viewBox="0 0 10 7" className="h-[7px] w-[10px]" fill="none" stroke="#15130d">
              <path d="M0 6l7-5v5" />
            </svg>
            <Down />
          </button>
          <button className={`${toggleOn} mt-[23px] w-[13px]`}>Hz</button>
          <button className={`${toggleOff} mt-[2px] w-[13px]`}>♪</button>
          <button aria-label="Phase" className={`${toggleOff} mt-[14px] w-[13px]`}>
            <i className="size-[4px] rounded-full border border-[#15130d]" />
          </button>
          <button aria-label="Spin" className={`${toggleOn} mt-px w-[13px]`}>
            <i className="size-[6px] rounded-full border border-[#15130d]" />
          </button>
        </div>
      </div>
    </Device>
  );
}

function Equalizer() {
  return (
    <Device title="Electric Git EQ 1" className="min-w-0 flex-1" tools={false}>
      <div className="flex flex-1 pt-[3px]">
        <ul className="w-[32px] pt-[8px] pl-[4px]">
          {[1, 2, 3, 4, 5, 6, 7, 8].map((n) => (
            <li key={n} className="flex h-[13px] items-center gap-[3px]">
              <input
                type="checkbox"
                aria-label={`Band ${n}`}
                defaultChecked={![1, 6, 7].includes(n)}
                className="size-[9px] shrink-0 appearance-none border border-[#15130d] bg-[#5c5844] checked:bg-[#fbb81e]"
              />
              <span className="flex h-[12px] w-[15px] items-center justify-center border border-[#38363b] text-[7px] font-bold text-[#121014]">
                {n}
              </span>
            </li>
          ))}
        </ul>
        <div className="flex w-[36px] shrink-0 flex-col gap-[2px] pt-[3px]">
          <Knob label="Freq" value="67.3 Hz" angle={-105} from={-140} />
          <Knob label="Gain" value="7.62 dB" angle={80} from={0} center />
          <Knob label="Q" value="1.00" angle={-10} from={-140} />
        </div>
        <div className="flex min-w-0 flex-1 flex-col">
          <svg viewBox="0 0 48 96" preserveAspectRatio="xMinYMin slice" className="h-[96px] w-full">
            <path d="M4 0h200v96H4a4 4 0 0 1-4-4V4a4 4 0 0 1 4-4z" fill="#0b0b0b" />
            <path d="M15 11h200M15 30h200M15 49h200M15 68h200M15 87h200M24 0v96M33 0v96M40 0v96M45 0v96" stroke="#2c2c2d" />
            <g fill="#5c5c5e" fontSize="7" textAnchor="end">
              <text x="13" y="13">12</text>
              <text x="13" y="32">6</text>
              <text x="13" y="51">0</text>
              <text x="13" y="70">-6</text>
              <text x="13" y="89">-12</text>
            </g>
            <path d="M0 45c14-2 24-8 34-15 4-3 8-4 14-4" fill="none" stroke="#e2a91f" strokeWidth="1.300" />
            <circle cx="45" cy="26" r="4" fill="none" stroke="#4fb8dd" strokeWidth="1.600" />
          </svg>
          <div className="mt-[10px] flex gap-[3px] pl-px">
            {["M1 6q0-4 3-4h6", "M1 1q4 3 9 3M1 6q4-2 5-2", "M10 1Q3 1 3 4t7 3"].map((d, i) => (
              <button key={d} aria-label={`Curve ${i + 1}`} className={`${i === 2 ? toggleOn : toggleOff} w-[16px] shrink-0`}>
                <svg viewBox="0 0 11 7" className="h-[7px] w-[11px] shrink-0" fill="none" stroke="#15130d">
                  <path d={d} />
                </svg>
              </button>
            ))}
          </div>
        </div>
      </div>
    </Device>
  );
}

function DeviceChain() {
  return (
    <section aria-label="Devices" className="mx-[6px] mt-[6px] flex rounded-t-[5px] rounded-bl-[5px] bg-[#29271c] p-[4px]">
      <Arpeggiator />
      <Handle />
      <Rack />
      <Handle />
      <Multiband />
      <Handle />
      <AutoFilter />
      <Handle />
      <Equalizer />
    </section>
  );
}

/* ---------- status line ---------- */

function StatusBar() {
  const well = "my-[5px] h-[16px] border-2 border-[#201f17] bg-[#403e44]";
  return (
    <footer className="flex items-center px-[6px]">
      <RoundKey label="Info">
        <path d="M4.500 3v7l6-3.500z" fill="#0a0a08" />
      </RoundKey>
      <div className={`${well} ml-[6px] flex-1`} />
      <div className={`${well} ml-[6px] w-[149px]`} />
      <div className="ml-[4px] flex h-[24px] w-[230px] items-center justify-end gap-[3px] self-start rounded-b-[4px] bg-[#29271c] pr-[5px]">
        <span className="text-[7px] font-bold whitespace-nowrap text-[#0c0b08]">1-Guitar-Evil Eddie(Amped)</span>
        <svg viewBox="0 0 126 13" className="h-[13px] w-[126px] shrink-0">
          <path d="M2 1h80v11H2z" fill="#403e44" stroke="#000" strokeWidth="1.500" />
          <path d="M36 2h14v9H36zM84 1h22v11H84z" fill="#08090a" />
          <path d="M107 1h18v11h-18z" fill="#403e44" />
          <path d="M110 3h6v7h-6z" fill="#08090a" />
          <path d="M15 4h12M16 8h10" stroke="#c7574b" strokeDasharray="3 1" />
          <path d="M16 5.500h10" stroke="#dcd59a" strokeDasharray="3 1" />
          <path d="M29 4h4M29 8h4M52 8h6" stroke="#7ec22d" strokeWidth="1.500" />
          <path d="M62 4h12M62 8h6M86 8l4-3 4 2 4-2 6 3" fill="none" stroke="#a8a69c" />
          <path d="M5 4h6M5 8h6M38 5h9M53 4h4" stroke="#1c1b1e" />
        </svg>
      </div>
      <button aria-label="Hide devices" className="ml-[3px]">
        <svg viewBox="0 0 13 13" className="block size-[13px]">
          <circle cx="6.500" cy="6.500" r="6" fill="#2f2d26" />
          <path d="M6.500 3l3.500 6.500H3z" fill="#0a0a08" />
        </svg>
      </button>
    </footer>
  );
}

/* ---------- dialogs ---------- */

function AppMark() {
  return (
    <svg viewBox="0 0 11 11" className="size-[11px] shrink-0">
      <rect width="11" height="11" rx="2" fill="#0d0d0a" />
      <path d="M3 8.500h5V5.500a2.500 2.500 0 0 0-5 0h3v1.500H3" fill="none" stroke="#f3f3e6" strokeWidth="1.200" />
    </svg>
  );
}

function CloseX({ className }: { className: string }) {
  return (
    <button aria-label="Close" className={`flex size-[14px] items-center justify-center rounded-[2px] border border-white/70 ${className}`}>
      <svg viewBox="0 0 8 8" className="size-[8px]" stroke="#fff" strokeWidth="1.800">
        <path d="M.7.700l6.600 6.600M7.300.700.700 7.300" />
      </svg>
    </button>
  );
}

type Row = { label: string; value: string; kind: "select" | "toggle" | "on" | "pill"; width: string; lit?: boolean };

const EXPORT_FORM: { title: string; rows: Row[] }[] = [
  {
    title: "Data",
    rows: [
      { label: "Rendered Track:", value: "Master", kind: "select", width: "w-[56px]", lit: true },
      { label: "Normalize:", value: "Off", kind: "toggle", width: "w-[31px]" },
      { label: "Render as Loop:", value: "Off", kind: "toggle", width: "w-[31px]" },
    ],
  },
  {
    title: "Audio",
    rows: [
      { label: "File Type:", value: "Wav", kind: "select", width: "w-[31px]" },
      { label: "Convert to Mono:", value: "Off", kind: "toggle", width: "w-[31px]" },
      { label: "Sample Rate:", value: "48000", kind: "select", width: "w-[31px]" },
      { label: "Bit Depth:", value: "16", kind: "select", width: "w-[31px]" },
      { label: "Dither Options:", value: "Triangular", kind: "select", width: "w-[56px]" },
      { label: "Create Analysis File:", value: "On", kind: "on", width: "w-[31px]" },
    ],
  },
  {
    title: "Video",
    rows: [
      { label: "Create Video File:", value: "Off", kind: "toggle", width: "w-[31px]" },
      { label: "Video Encoder:", value: "QuickTime Movie", kind: "select", width: "w-[69px]" },
      { label: "Encoder Settings:", value: "Edit", kind: "pill", width: "w-[31px]" },
    ],
  },
];

function RowControl({ row }: { row: Row }) {
  const base = `${row.width} h-[10px] border border-[#15130d] text-[8px] leading-[8px]`;
  if (row.kind === "select")
    return (
      <span className={`${base} flex items-center pr-[2px] ${row.lit ? "bg-[#a9bba6]" : ""}`}>
        <select aria-label={row.label} className="h-[8px] min-w-0 flex-1 appearance-none pl-px text-[7px] leading-[8px] font-normal text-[#0f0d12]">
          <option>{row.value}</option>
        </select>
        <Down />
      </span>
    );
  if (row.kind === "on")
    return (
      <button type="button" aria-label={row.label} className={`${base} bg-[#a8a8aa] font-normal text-[#77777c]`}>
        {row.value}
      </button>
    );
  return (
    <button
      type="button"
      aria-label={row.label}
      className={`${base} bg-[#6f6b40] font-normal text-[#4f4c2a] ${row.kind === "pill" ? "rounded-full" : ""}`}
    >
      {row.value}
    </button>
  );
}

function ExportDialog() {
  return (
    <div role="dialog" aria-label="Export Audio/Video" className="absolute top-[68px] left-0 flex w-[194px] flex-col border-r-2 border-b-2 border-[#d9dcc0] bg-black">
      <div className="flex h-[21px] items-center gap-[3px] border-t border-[#fafbe2] bg-linear-to-b from-[#f0f1c8] to-[#d9ddae] pr-[3px] pl-px">
        <AppMark />
        <span className="flex-1 font-['Lato'] text-[10px] leading-[14px] font-bold text-[#fbfce8] [text-shadow:1px_1px_1px_#b9bc8c]">Export Audio/Video</span>
        <CloseX className="bg-[#b58a8c]" />
      </div>
      <form className="mt-[4px] mr-[5px] mb-[6px] ml-[4px] rounded-[5px] border-[5px] border-[#29271c] bg-[#434046] px-[9px] pt-px pb-[9px] text-[7px] font-bold text-[#141217]">
        {EXPORT_FORM.map((g) => (
          <fieldset key={g.title} className="mb-[4px]">
            <legend className="flex h-[15px] w-full items-center gap-[6px]">
              {g.title}
              <i className="h-px flex-1 bg-[#2d2b2f]" />
            </legend>
            {g.rows.map((r) => (
              <div key={r.label} className="flex h-[15px] items-center justify-between">
                <span>{r.label}</span>
                <RowControl row={r} />
              </div>
            ))}
          </fieldset>
        ))}
        <p className="pl-[3px] leading-[11px] whitespace-nowrap">
          Live will render the output of the chosen track
          <br />
          over the selected time range [1.1.1 - 189.1.1].
        </p>
        <div className="mt-[14px] flex justify-center gap-[5px] text-[8px] leading-[8px]">
          <button type="button" className="h-[10px] w-[41px] rounded-full border border-[#15130d] bg-[#6f6b40] font-normal text-[#4f4c2a]">
            OK
          </button>
          <button type="button" className="h-[10px] w-[41px] rounded-full border border-[#15130d] bg-[#77733f] font-normal">
            Cancel
          </button>
        </div>
      </form>
    </div>
  );
}

function ProgressDialog() {
  return (
    <div role="dialog" aria-label="Export progress" className="absolute top-[288px] right-[15px] flex w-[307px] flex-col border-2 border-t-0 border-[#b4c69c] bg-black">
      <div className="flex h-[20px] items-center gap-[4px] border-t border-[#e4efc4] bg-linear-to-b from-[#cfdca6] to-[#a9bb80] px-px pr-[2px]">
        <AppMark />
        <span className="flex-1 font-['Lato'] text-[11px] leading-[14px] text-white [text-shadow:1px_1px_1px_#5d6b3c]">Export Audio/Video...</span>
        <CloseX className="bg-[#cf5140]" />
      </div>
      <div className="mx-[4px] my-[5px] flex flex-col items-center rounded-[5px] border-[5px] border-[#29271c] bg-[#434046] px-[5px] pt-[5px] pb-[5px] text-[7px] text-[#141217]">
        <p className="w-full leading-[10px] font-bold">Rendering audio to disk...</p>
        <div
          role="progressbar"
          aria-label="Rendering"
          aria-valuenow={10}
          className="relative mt-[12px] flex h-[14px] w-full items-center justify-center bg-black text-[8px] text-[#8a8a78]"
        >
          <i className="absolute inset-y-0 left-0 border border-[#22300c] bg-[#9cff0e]" style={{ width: "10.3%" }} />
          10 %
        </div>
        <button className="mt-[29px] h-[10px] w-[70px] rounded-full border border-[#15130d] bg-[#6f6b45] text-[8px] leading-[8px]">
          Cancel
        </button>
      </div>
    </div>
  );
}

export default function App() {
  return (
    <div className="relative min-h-screen overflow-hidden bg-black font-['Liberation_Sans',Arial,sans-serif]">
      <Transport />
      <div className="flex gap-[5px] pr-[6px]">
        <Browser />
        <Arrangement />
      </div>
      <DeviceChain />
      <StatusBar />
      <ExportDialog />
      <ProgressDialog />
    </div>
  );
}
